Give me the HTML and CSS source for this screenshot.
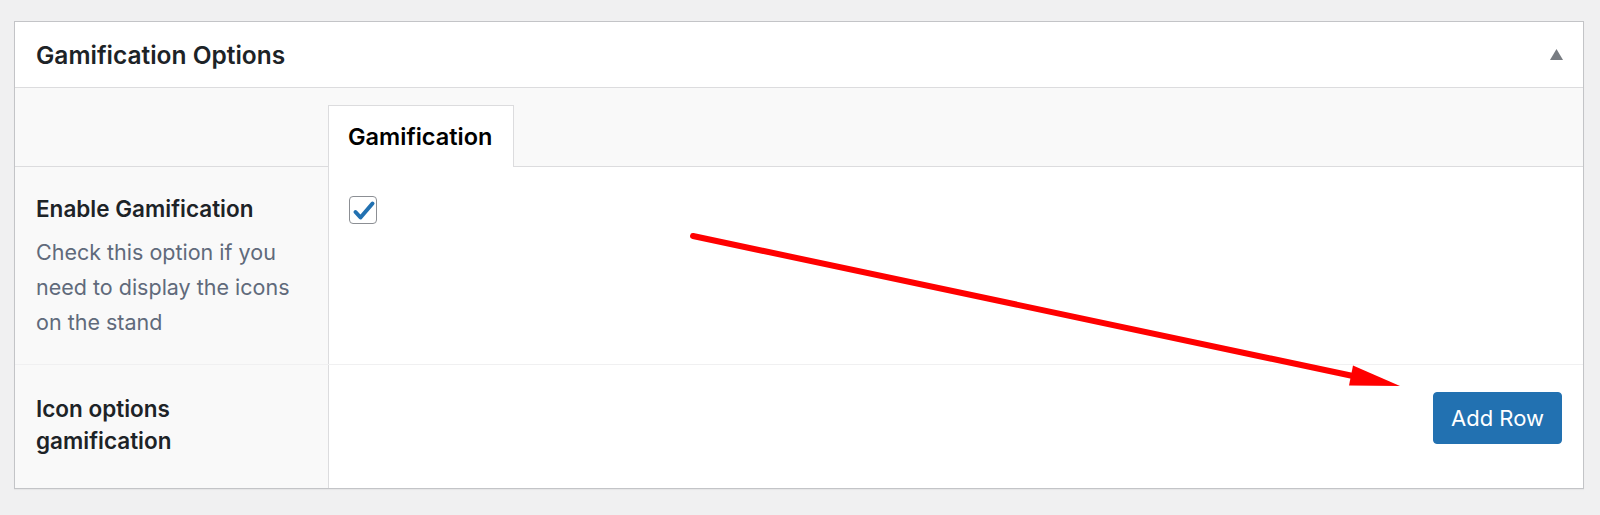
FILE: index.html
```html
<!DOCTYPE html>
<html lang="en">
<head>
  <meta charset="UTF-8" />
  <meta name="viewport" content="width=device-width, initial-scale=1" />
  <title>Gamification Options</title>
  <link rel="stylesheet" href="styles.css">
</head>
<body>

  <div class="postbox">
    <div class="postbox-header">
      <h2>Gamification Options</h2>
      <svg class="toggle" width="13" height="11" viewBox="0 0 13 11"><polygon points="6.5,0 13,11 0,11" fill="#787c82"/></svg>
    </div>

    <div class="tabs">
      <div class="tab">Gamification</div>
    </div>

    <div class="row">
      <div class="row-label">
        <div class="label">Enable Gamification</div>
        <p class="description">Check this option if you need to display the icons on the stand</p>
      </div>
      <div class="row-field">
        <span class="checkbox">
          <svg width="26" height="26" viewBox="0 0 26 26"><polyline points="5.5,15 10.5,20.5 22.5,6.5" fill="none" stroke="#2271b1" stroke-width="4" stroke-linecap="round" stroke-linejoin="round"/></svg>
        </span>
      </div>
    </div>

    <div class="row last">
      <div class="row-label">
        <div class="label">Icon options gamification</div>
      </div>
      <div class="row-field right">
        <button class="button-primary">Add Row</button>
      </div>
    </div>
  </div>

  <!-- flecha de anotación -->
  <svg class="annotation" width="1600" height="515" viewBox="0 0 1600 515">
    <line x1="693" y1="236" x2="1353" y2="376" stroke="#ff0000" stroke-width="6" stroke-linecap="round"/>
    <polygon points="1400,386 1349,385.5 1353,365.5" fill="#ff0000"/>
  </svg>

</body>
</html>
```

FILE: styles.css
```css
* {
  margin: 0;
  padding: 0;
  box-sizing: border-box;
}

body {
  font-family: Inter, "Noto Sans", sans-serif;
  background: #f0f0f1;
  color: #1d2327;
  padding: 21px 16px 0 14px;
  position: relative;
  min-height: 515px;
}

.postbox {
  background: #fff;
  border: 1px solid #c3c4c7;
  box-shadow: 0 1px 1px rgba(0,0,0,0.04);
}

.postbox-header {
  display: flex;
  align-items: center;
  justify-content: space-between;
  height: 66px;
  padding: 0 20px 0 21px;
  border-bottom: 1px solid #dcdcde;
}

.postbox-header h2 {
  font-size: 24.5px;
  font-weight: 600;
  color: #1d2327;
}

.tabs {
  display: flex;
  background: #f9f9f9;
  border-bottom: 1px solid #dcdcde;
  padding: 17px 0 0 313px;
}

.tab {
  width: 186px;
  height: 62px;
  margin-bottom: -1px;
  padding: 0 19px;
  line-height: 61px;
  font-size: 23.5px;
  font-weight: 600;
  color: #000;
  background: #fff;
  border: 1px solid #dcdcde;
  border-bottom: 0;
  white-space: nowrap;
}

.row {
  display: grid;
  grid-template-columns: 314px 1fr;
  border-bottom: 1px solid #f0f0f1;
}

.row.last {
  border-bottom: 0;
}

.row-label {
  background: #f9f9f9;
  border-right: 1px solid #dcdcde;
  padding: 26px 21px 24px;
}

.row.last .row-label {
  padding: 28px 21px 31px;
}

.label {
  max-width: 262px;
  font-size: 22.5px;
  line-height: 32px;
  font-weight: 600;
  color: #1d2327;
}

.description {
  margin-top: 10px;
  font-size: 21.5px;
  line-height: 35px;
  color: #606a7b;
}

.row-field {
  padding: 29px 20px;
}

.row-field.right {
  display: flex;
  justify-content: flex-end;
  align-items: flex-start;
  padding: 27px 21px;
}

.checkbox {
  display: flex;
  align-items: center;
  justify-content: center;
  width: 28px;
  height: 28px;
  border: 1px solid #8c8f94;
  border-radius: 4px;
  background: #fff;
}

.button-primary {
  width: 129px;
  height: 52px;
  font-family: inherit;
  font-size: 22px;
  color: #fff;
  background: #2271b1;
  border: 1px solid #2271b1;
  border-radius: 4px;
  cursor: pointer;
}

.annotation {
  position: absolute;
  top: 0;
  left: 0;
  pointer-events: none;
}
```
